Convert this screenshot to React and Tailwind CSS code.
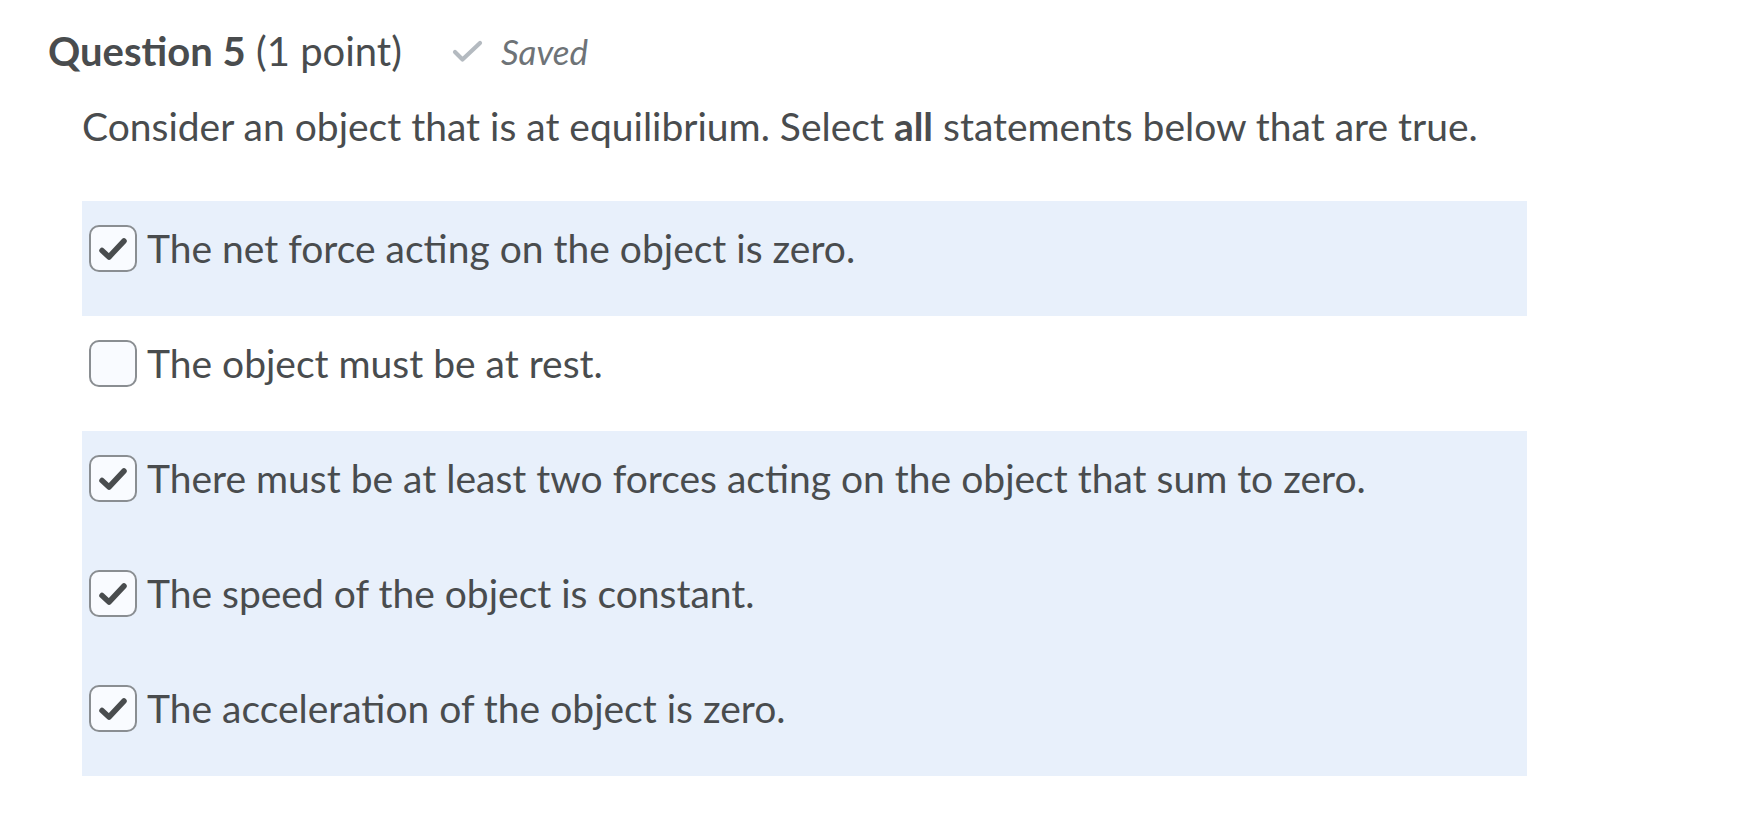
const options = [
  { text: "The net force acting on the object is zero.", checked: true },
  { text: "The object must be at rest.", checked: false },
  { text: "There must be at least two forces acting on the object that sum to zero.", checked: true },
  { text: "The speed of the object is constant.", checked: true },
  { text: "The acceleration of the object is zero.", checked: true },
];

const Box = ({ checked }) => (
  <span className="flex h-[47px] w-[48px] shrink-0 items-center justify-center rounded-[10px] border-[2.5px] border-[#8a8e92] bg-[#f9fbff]">
    {checked && (
      <svg viewBox="0 0 30 26" className="h-[26px] w-[30px]" fill="none">
        <path d="M4 14.5l7 6.5L26 5" stroke="#494c4e" strokeWidth="5.5" strokeLinecap="round" strokeLinejoin="round" />
      </svg>
    )}
  </span>
);

export default function App() {
  return (
    <div className="min-h-screen bg-white pl-[48px] pt-[27px] text-[#494c4e]" style={{ fontFamily: "Lato, 'Noto Sans', sans-serif" }}>
      <div className="flex items-center text-[40px] leading-[48px]">
        <span>
          <span className="font-bold">Question 5</span> (1 point)
        </span>
        <span className="ml-[50px] flex items-center gap-[18px] text-[35px] text-[#6e7377]">
          <svg viewBox="0 0 31 23" className="h-[23px] w-[31px]" fill="none">
            <path d="M3 12l7.5 7.5L28 3" stroke="#b4bac0" strokeWidth="4.2" strokeLinecap="round" strokeLinejoin="round" />
          </svg>
          <span className="italic">Saved</span>
        </span>
      </div>

      <p className="ml-[34px] mt-[27px] text-[39px] leading-[48px]">
        Consider an object that is at equilibrium. Select <span className="font-bold">all</span> statements below that are true.
      </p>

      <div className="ml-[34px] mt-[51px] w-[1445px]">
        {options.map((o, i) => (
          <div key={i} className={`flex h-[115px] items-center gap-[10px] pl-[7px] pb-[20px] ${o.checked ? "bg-[#e8f0fb]" : "bg-white"}`}>
            <Box checked={o.checked} />
            <span className="text-[39px] leading-[47px]">{o.text}</span>
          </div>
        ))}
      </div>
    </div>
  );
}
